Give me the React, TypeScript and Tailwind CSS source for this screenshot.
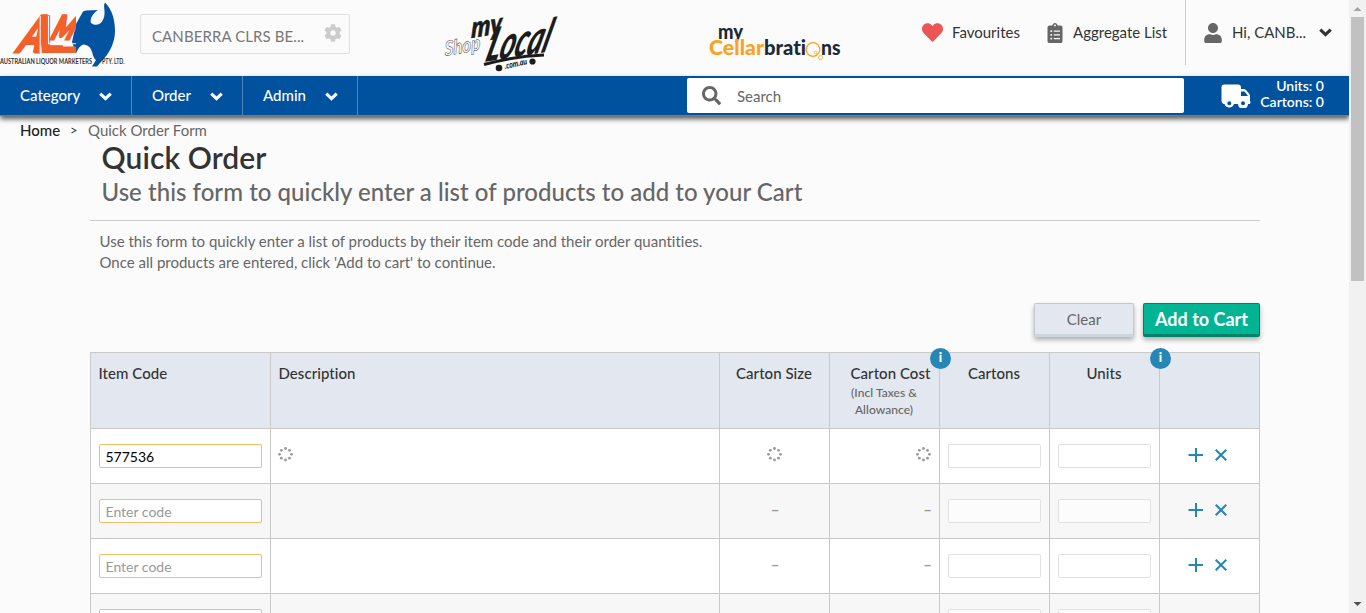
import type { ReactNode } from 'react';
import { FaClipboardList, FaCog, FaHeart, FaSearch, FaUser } from 'react-icons/fa';

function Chevron({ className }: { className: string }) {
  return (
    <svg viewBox="0 0 13 9" className={className} fill="none" stroke="currentColor" strokeWidth="3.2">
      <path d="M1.3 1.7 6.5 6.6 11.7 1.7" />
    </svg>
  );
}

function AlmLogo() {
  return (
    <svg width="126" height="76" viewBox="0 0 126 76" className="block shrink-0">
      <clipPath id="mark"><path d="M0 0H76V76H0Z" /></clipPath>
      <path fill="#0353a0" d="M72 42 76 24 83 11.500 86 10.500 98 10C93 13 89.500 19 91 23 98 28 104 22 104.500 14 105 9 103 6 105 2.500 112 9 115 20 115 31 115 42 110 52 104 58.500L97 66.500 92 66.500 96 60C91 56 94 46 84 44.500 80 45 78 49 76 53.500Z" />
      <g clipPath="url(#mark)" fontFamily="Lato, sans-serif" fontWeight="900" fill="#f2602c" stroke="#f2602c">
        <text transform="translate(15 52.200) skewX(-25)" fontSize="50" textLength="24" lengthAdjust="spacingAndGlyphs" strokeWidth="3">A</text>
        <text transform="translate(39 52.200)" fontSize="50" textLength="24" lengthAdjust="spacingAndGlyphs" strokeWidth="1.500">L</text>
        <text transform="translate(49 39) skewX(-27)" fontSize="32" textLength="22" lengthAdjust="spacingAndGlyphs" strokeWidth="3.200">M</text>
        <path d="M42 46.500H76V53H42Z" stroke="none" />
        <path d="M40.200 16V53M48.500 16V43.800H76" fill="none" stroke="#fbfbfb" strokeWidth="1.100" />
      </g>
      <g fontFamily="Lato, sans-serif" fontWeight="700" fontSize="6.6" fill="#333">
        <text x="0" y="64" textLength="92" lengthAdjust="spacingAndGlyphs">AUSTRALIAN LIQUOR MARKETERS</text>
        <text x="102" y="64" textLength="22.500" lengthAdjust="spacingAndGlyphs">PTY. LTD.</text>
      </g>
    </svg>
  );
}

function LocalLogo() {
  return (
    <svg width="124" height="76" viewBox="0 0 124 76" className="block shrink-0" fontFamily="Lato, sans-serif" fontStyle="italic">
      <text transform="translate(4 56) rotate(-10) skewX(-8)" fontSize="20" fontWeight="700" textLength="36" lengthAdjust="spacingAndGlyphs" fill="#fff" stroke="#555" strokeWidth=".6">Shop</text>
      <text transform="translate(30 38) rotate(-9) skewX(-12)" fontSize="29" fontWeight="900" textLength="31" lengthAdjust="spacingAndGlyphs" fill="#1c1b1b" stroke="#1c1b1b" strokeWidth=".6">my</text>
      <text transform="translate(43 62) rotate(-9) skewX(-25)" fontSize="45" fontWeight="900" textLength="64" lengthAdjust="spacingAndGlyphs" fill="#1c1b1b">Local</text>
      <path d="M43 64.500Q75 56 103 55" fill="none" stroke="#1c1b1b" strokeWidth="3" />
      <circle cx="58" cy="68" r="3.3" fill="#1c1b1b" />
      <circle cx="91.500" cy="61.500" r="3.1" fill="#1c1b1b" />
      <text transform="translate(64 69) rotate(-12)" fontSize="9" fontWeight="900" textLength="23" lengthAdjust="spacingAndGlyphs" fill="#1c1b1b">.com.au</text>
    </svg>
  );
}

function CellarLogo() {
  return (
    <svg width="140" height="76" viewBox="0 0 140 76" className="block shrink-0" fontFamily="Lato, sans-serif" fontWeight="900">
      <text x="12" y="39" fontSize="20" textLength="25" lengthAdjust="spacingAndGlyphs" fill="#1b2a36">my</text>
      <text x="3" y="55" fontSize="20" textLength="55" lengthAdjust="spacingAndGlyphs" fill="#fba31e">Cellar</text>
      <text x="58" y="55" fontSize="20" textLength="42" lengthAdjust="spacingAndGlyphs" fill="#1b2a36">brati</text>
      <g fill="none" stroke="#fba31e">
        <circle cx="107" cy="49.500" r="6.800" strokeWidth="1.300" />
        <circle cx="114.500" cy="57.500" r="2" strokeWidth=".8" />
        <circle cx="109.500" cy="52.500" r="1.300" strokeWidth=".7" />
      </g>
      <text x="115" y="55" fontSize="20" textLength="19.500" lengthAdjust="spacingAndGlyphs" fill="#1b2a36">ns</text>
    </svg>
  );
}

function Truck() {
  return (
    <svg width="30" height="24" viewBox="0 0 30 24" className="block">
      <path fill="#fff" fillRule="evenodd" d="M3 .5H17Q20 .5 20 3.500V5H22.500Q24 5 25 6L28 9.500Q29 10.500 29 12V17Q30 18 29 20H27A5 5 0 0 1 17 20H13A5 5 0 0 1 3.500 20Q1 20 .5 17V3.500Q.5 .5 3 .5ZM20 7.500V12H27L24.200 8.200Q23.700 7.500 23 7.500Z" />
      <circle cx="8.300" cy="19.300" r="3" fill="#00529f" stroke="#fff" strokeWidth="2" />
      <circle cx="22" cy="19.300" r="3" fill="#00529f" stroke="#fff" strokeWidth="2" />
    </svg>
  );
}

const dots = [[7.5, 1.5], [11.5, 3.3], [13.5, 7.3], [11.5, 11.2], [7.5, 13], [3.3, 11.2], [1.5, 7.3], [3.3, 3.3]];

function Spinner() {
  return (
    <svg width="15" height="15" viewBox="0 0 15 15" className="block" fill="#999">
      {dots.map(([x, y]) => <circle key={`${x}-${y}`} cx={x} cy={y} r="1.4" />)}
    </svg>
  );
}

function NavItem({ label, className }: { label: string; className: string }) {
  return (
    <div className={`flex items-center justify-between border-r border-[#4c86bb] pl-5 pr-[19px] text-[15px] font-medium text-white ${className}`}>
      <span>{label}</span>
      <Chevron className="mt-px h-[9px] w-[13px]" />
    </div>
  );
}

function Info() {
  return (
    <span className="absolute -right-[12px] -top-[5px] z-10 flex h-[21px] w-[21px] items-center justify-center rounded-full bg-[#2687b6] pb-[2px] text-[13px] font-black leading-none text-white">i</span>
  );
}

const cell = 'border-b border-r border-[#c9c9c9]';
const columns = 'grid grid-cols-[181px_449px_110px_110px_110px_110px_100px] w-[1170px]';

function Value({ loading, className }: { loading: boolean; className: string }) {
  return (
    <div className={`${cell} flex pl-[7px] text-[15px] leading-[18px] text-[#999] ${className}`}>
      {loading ? <span className="-ml-px mr-px pt-[18px]"><Spinner /></span> : <span className="pt-[16px] font-bold">–</span>}
    </div>
  );
}

function Box() {
  return (
    <div className={`${cell} px-2 pt-[15px]`}>
      <div className="h-6 rounded-xs border border-[#e1e1e1] bg-white/60" />
    </div>
  );
}

function Row({ code, shaded }: { code?: string; shaded: boolean }) {
  const loading = Boolean(code);
  return (
    <div className={`${columns} h-[55px] shrink-0 ${shaded ? 'bg-[#f7f7f7]' : 'bg-white'}`}>
      <div className={`${cell} border-l px-2 pt-[15px]`}>
        <input defaultValue={code} placeholder="Enter code" className="block h-6 w-[163px] rounded-xs border border-[#f5bd6a] bg-white pl-[5.5px] text-[14px] text-black outline-none placeholder:text-[#999]" />
      </div>
      <div className={`${cell} pl-[7px] pt-[18px]`}>{loading && <Spinner />}</div>
      <Value loading={loading} className="justify-center pr-[6px]" />
      <Value loading={loading} className="justify-end pr-[7px]" />
      <Box />
      <Box />
      <div className={`${cell} flex gap-[12px] pl-[28px] pt-[19px] text-[#2687b6]`}>
        <svg width="15" height="15" viewBox="0 0 15 15" fill="none" stroke="currentColor" strokeWidth="2"><path d="M.5 7H15M8 0V14" /></svg>
        <svg width="12" height="15" viewBox="0 0 12 15" fill="none" stroke="currentColor" strokeWidth="2.2"><path d="M.7 1.700 11.300 12.300M11.300 1.700 .7 12.300" /></svg>
      </div>
    </div>
  );
}

function Head({ children, className = '' }: { children?: ReactNode; className?: string }) {
  return <div className={`${cell} relative border-t pl-[7.5px] pr-[8.5px] pt-[11px] text-[15px] font-medium leading-[18px] tracking-[.05px] text-[#333] ${className}`}>{children}</div>;
}

export default function App() {
  return (
    <div className="flex h-[613px] w-[1366px] overflow-hidden bg-[#fbfbfb] font-[Lato,sans-serif] text-[15px] text-[#333] [font-variant-ligatures:none]">
      <div className="flex w-[1349px] flex-col overflow-hidden">
        <header className="flex h-[76px] shrink-0">
          <AlmLogo />
          <div className="ml-[14px] mt-[14px] flex h-10 w-[210px] items-center justify-between rounded-xs border border-[#e0e0e0] pl-[11px] pr-[7px] text-[#777]">
            <span className="pt-1 tracking-[.1px]">CANBERRA CLRS BE...</span>
            <FaCog className="mb-[2px] size-[18px] text-[#ccc]" />
          </div>
          <div className="ml-[91px]"><LocalLogo /></div>
          <div className="ml-[141px]"><CellarLogo /></div>
          <div className="ml-[76px] flex h-[65px] items-center">
            <FaHeart className="size-[21px] text-[#ed5555]" />
            <span className="ml-[9px] w-[68px]">Favourites</span>
            <FaClipboardList className="ml-[25px] h-[20px] w-[20px] text-[#666]" />
            <span className="ml-[8px] w-[95px] whitespace-nowrap">Aggregate List</span>
          </div>
          <div className="ml-[17px] flex h-[65px] items-center border-l border-[#ccc] pl-[17px]">
            <FaUser className="size-[20px] text-[#666]" />
            <span className="ml-[9px] w-[76px] whitespace-nowrap">Hi, CANB...</span>
            <Chevron className="ml-[11px] h-[9px] w-[13px]" />
          </div>
        </header>
        <nav className="z-20 flex h-10 shrink-0 border-b border-[#4588c1] bg-[#00529f] shadow-[0_3px_5px_rgba(0,0,0,.65)]">
          <NavItem label="Category" className="w-[132px]" />
          <NavItem label="Order" className="w-[111px]" />
          <NavItem label="Admin" className="w-[115px]" />
          <div className="ml-[329px] mt-[2px] flex h-[35px] w-[497px] items-center rounded-xs bg-white pl-[15px] text-[#666]">
            <FaSearch className="size-[19px]" />
            <span className="ml-4 pt-[2px]">Search</span>
          </div>
          <div className="ml-[37px] pt-[8px]"><Truck /></div>
          <div className="w-[73px] pt-[2px] text-right text-[14px] font-semibold leading-[16px] text-white">
            <div>Units: 0</div>
            <div>Cartons: 0</div>
          </div>
        </nav>
        <main className="flex flex-col">
          <div className="flex h-[28px] pl-5 pt-[5px] leading-[18px]">
            <span className="w-[50px] font-medium text-[#222]">Home</span>
            <span className="w-[18px] text-[13px]">&gt;</span>
            <span className="text-[#666]">Quick Order Form</span>
          </div>
          <div className="ml-[90px] flex w-[1170px] flex-col">
            <div className="h-[77px] border-b border-[#ccc] pl-[11.5px]">
              <h1 className="-mt-[6px] h-[37px] text-[30px] font-semibold leading-[38px] tracking-[.08px]">Quick Order</h1>
              <h2 className="text-[24px] font-medium leading-[34px] tracking-[.03px] text-[#666]">Use this form to quickly enter a list of products to add to your Cart</h2>
            </div>
            <p className="h-[82px] pl-[9.5px] pt-[10px] leading-[21px] text-[#666]">
              Use this form to quickly enter a list of products by their item code and their order quantities.<br />
              Once all products are entered, click 'Add to cart' to continue.
            </p>
            <div className="flex h-[49px] justify-end gap-[9px]">
              <button className="h-[34px] w-[100px] rounded-xs border border-b-[3px] border-[#bfc9d4] border-b-[#ccd6df] bg-[#e3e7ef] text-[#666] shadow-[0_3px_5px_rgba(0,0,0,.3)]">Clear</button>
              <button className="h-[34px] w-[117px] rounded-xs border border-b-[3px] border-[#008269] bg-[#00b494] text-[18px] font-bold leading-[30px] text-white shadow-[0_3px_5px_rgba(0,0,0,.3)]">Add to Cart</button>
            </div>
            <div className={`${columns} h-[77px] bg-[#e3e7ef]`}>
              <Head className="border-l">Item Code</Head>
              <Head>Description</Head>
              <Head className="text-center">Carton Size</Head>
              <Head className="text-right">
                Carton Cost
                <div className="mt-[2px] w-[93px] text-center text-[12px] leading-[17px] text-[#666]">(Incl Taxes &amp;<br />Allowance)</div>
                <Info />
              </Head>
              <Head className="text-center">Cartons</Head>
              <Head className="text-center">Units<Info /></Head>
              <Head />
            </div>
            <Row code="577536" shaded={false} />
            <Row shaded />
            <Row shaded={false} />
            <Row shaded />
          </div>
        </main>
      </div>
      <div className="flex w-[17px] flex-col items-center bg-[#f1f1f1]">
        <svg width="17" height="17" viewBox="0 0 17 17"><path d="M4.500 11 8.500 7 12.500 11Z" fill="#a3a3a3" /></svg>
        <div className="h-[264px] w-[13px] bg-[#c1c1c1]" />
        <svg width="17" height="17" viewBox="0 0 17 17" className="mt-auto"><path d="M4.500 6 8.500 10 12.500 6Z" fill="#505050" /></svg>
      </div>
    </div>
  );
}
